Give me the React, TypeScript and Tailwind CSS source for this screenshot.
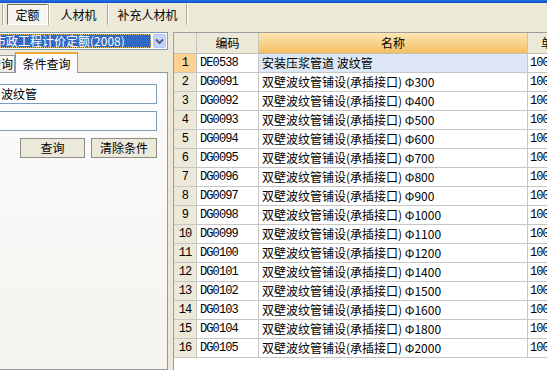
const rows: [string, string][] = [
  ["DE0538", "安装压浆管道 波纹管"],
  ["DG0091", "双壁波纹管铺设(承插接口) Φ300"],
  ["DG0092", "双壁波纹管铺设(承插接口) Φ400"],
  ["DG0093", "双壁波纹管铺设(承插接口) Φ500"],
  ["DG0094", "双壁波纹管铺设(承插接口) Φ600"],
  ["DG0095", "双壁波纹管铺设(承插接口) Φ700"],
  ["DG0096", "双壁波纹管铺设(承插接口) Φ800"],
  ["DG0097", "双壁波纹管铺设(承插接口) Φ900"],
  ["DG0098", "双壁波纹管铺设(承插接口) Φ1000"],
  ["DG0099", "双壁波纹管铺设(承插接口) Φ1100"],
  ["DG0100", "双壁波纹管铺设(承插接口) Φ1200"],
  ["DG0101", "双壁波纹管铺设(承插接口) Φ1400"],
  ["DG0102", "双壁波纹管铺设(承插接口) Φ1500"],
  ["DG0103", "双壁波纹管铺设(承插接口) Φ1600"],
  ["DG0104", "双壁波纹管铺设(承插接口) Φ1800"],
  ["DG0105", "双壁波纹管铺设(承插接口) Φ2000"],
];

function Sep() {
  return <div className="h-[21px] w-[2px] shrink-0 border-l border-r border-l-[#aca899] border-r-white" />;
}

function Toolbar() {
  return (
    <div className="flex h-[26px] shrink-0 items-start bg-[#ece9d8] pt-[1px]">
      <div className="ml-[2px]">
        <Sep />
      </div>
      <div className="ml-[3px] flex h-[21px] w-[41px] shrink-0 items-center justify-center border border-t-[#716f64] border-l-[#716f64] border-b-white border-r-white bg-[#f6f5f0]">
        定额
      </div>
      <Sep />
      <div className="flex h-[21px] w-[57px] shrink-0 items-center justify-center">人材机</div>
      <Sep />
      <div className="flex h-[21px] w-[77px] shrink-0 items-center justify-center">补充人材机</div>
      <Sep />
    </div>
  );
}

function LeftPanel() {
  return (
    <div className="w-[168px] shrink-0 overflow-hidden">
      <div className="-ml-[20px] flex h-full w-[188px] flex-col">
        {/* 定额库下拉 */}
        <div className="mt-[3px] flex h-[18px] border border-[#7f9db9] bg-white p-[1px]">
          <div className="flex flex-1 items-center overflow-hidden whitespace-nowrap border border-dotted border-[#e8c060] bg-[#316ac5] pl-[11px] leading-none text-white">
            市政工程计价定额(2008)
          </div>
          <div className="ml-[2px] flex w-[13px] items-center justify-center rounded-[2px] border border-[#b5c8f5] bg-[#c4d5fc]">
            <svg width="9" height="7" viewBox="0 0 9 7" fill="none">
              <path d="M1 1.5 4.5 5 8 1.5" stroke="#4d6185" strokeWidth="2" />
            </svg>
          </div>
        </div>

        {/* 标签页 */}
        <div className="mt-[2px] flex h-[21px] shrink-0 items-end border-b border-[#919b9c]">
          <div className="ml-[2px] flex h-[17px] w-[33px] items-center justify-end overflow-hidden whitespace-nowrap border border-b-0 border-[#919b9c] bg-gradient-to-b from-white to-[#ecebe6] pr-[1px]">
            快速查询
          </div>
          <div className="relative z-10 -mb-px flex h-[21px] w-[63px] items-center justify-center border-x border-t-2 border-x-[#919b9c] border-t-[#f2a93b] bg-[#fcfcfe]">
            条件查询
          </div>
        </div>

        <div className="flex flex-1 flex-col border-x border-b border-[#919b9c] bg-gradient-to-b from-[#fcfcfe] to-[#f4f3ee] pl-[9px] pr-[10px] pt-[11px]">
          <div className="flex h-[20px] items-center border border-[#7f9db9] bg-white pl-[10px]">波纹管</div>
          <div className="mt-[7px] h-[20px] border border-[#7f9db9] bg-white" />
          <div className="mt-[7px] flex justify-end gap-[6px]">
            <button className="flex h-[20px] w-[65px] items-center justify-center border border-[#8f8d80] bg-[#ebe9da]">
              查询
            </button>
            <button className="flex h-[20px] w-[66px] items-center justify-center border border-[#8f8d80] bg-[#ebe9da]">
              清除条件
            </button>
          </div>
        </div>
      </div>
    </div>
  );
}

function Grid() {
  const mono = "font-['Liberation_Mono',monospace] text-[12px] tracking-[-0.9px]";
  return (
    <div className="mt-[3px] flex-1 overflow-hidden border-l border-t border-[#9d9d9d] bg-white">
      <div className="w-[405px]">
        {/* 表头 */}
        <div className="flex h-[21px] border-b border-[#c2c0b4] bg-[#ece9d8]">
          <div className="w-[23px] shrink-0 border-r border-[#c8c6bb]" />
          <div className="flex w-[62px] shrink-0 items-center justify-center border-r border-[#c8c6bb]">编码</div>
          <div className="flex w-[269px] shrink-0 items-center justify-center border-r border-[#c8c6bb] bg-gradient-to-b from-[#fde6b3] to-[#f4bf5f]">
            名称
          </div>
          <div className="flex w-[50px] shrink-0 items-center justify-center">单位</div>
        </div>

        {rows.map(([code, name], i) => {
          const sel = i === 0;
          return (
            <div key={code} className="flex h-[19px] leading-[18px]">
              <div
                className={`flex w-[23px] shrink-0 items-center justify-center border-b border-r border-[#c6c6c6] ${mono} ${
                  sel ? "bg-[#fdd291]" : "bg-[#ece9d8]"
                }`}
              >
                {i + 1}
              </div>
              <div className={`flex w-[62px] shrink-0 items-center border-b border-r border-[#c6c6c6] pl-[3px] ${mono}`}>
                {code}
              </div>
              <div
                className={`flex w-[269px] shrink-0 items-center whitespace-nowrap border-b border-r border-[#c6c6c6] pl-[3px] ${
                  sel ? "bg-[#dde7f5]" : ""
                }`}
              >
                {name}
              </div>
              <div className={`flex w-[50px] shrink-0 items-center border-b border-[#c6c6c6] pl-[2px] ${mono}`}>100m</div>
            </div>
          );
        })}
      </div>
    </div>
  );
}

export default function App() {
  return (
    <div className="flex h-[370px] w-[547px] flex-col overflow-hidden bg-[#ece9d8] font-['Noto_Sans_CJK_SC',sans-serif] text-[12px] text-black">
      <div className="h-[3px] shrink-0 bg-gradient-to-b from-[#2b72e6] to-[#0a4fc8]" />
      <Toolbar />
      <div className="flex min-h-0 flex-1">
        <LeftPanel />
        <div className="w-[5px] shrink-0" />
        <Grid />
      </div>
    </div>
  );
}
